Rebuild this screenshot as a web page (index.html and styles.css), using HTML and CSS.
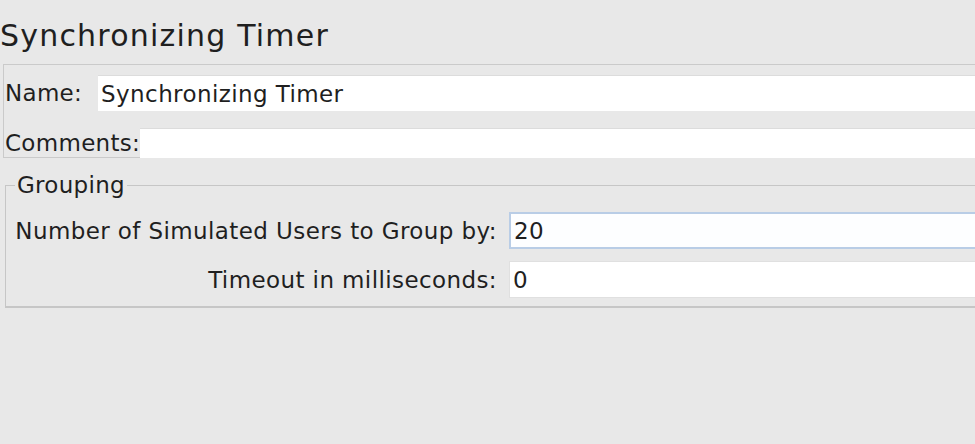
FILE: index.html
```html
<html>
	<head>
		<link rel="stylesheet" href="styles.css">
	</head>
	<body>
		<h1 class="title">Synchronizing Timer</h1>

		<div class="panel">
			<div class="row name-row">
				<label>Name:</label>
				<input class="field" value="Synchronizing Timer">
			</div>
			<div class="row comments-row">
				<label>Comments:</label>
				<input class="field">
			</div>
		</div>

		<fieldset class="group">
			<legend>Grouping</legend>
			<div class="grid">
				<label>Number of Simulated Users to Group by:</label>
				<input class="field focused" value="20">
				<label>Timeout in milliseconds:</label>
				<input class="field" value="0">
			</div>
		</fieldset>
	</body>
</html>
```
FILE: styles.css
```css
body {
	margin: 0;
	background: #e8e8e8;
	font-family: "DejaVu Sans", Verdana, sans-serif;
	color: #1f1f1f;
	overflow: hidden;
}

.title {
	margin: 0;
	height: 64px;
	padding-top: 17px;
	box-sizing: border-box;
	font-size: 30px;
	font-weight: normal;
	letter-spacing: 1.2px;
	line-height: 38px;
	color: #1f1f1f;
}

.panel {
	margin-left: 3px;
	border: 1px solid #cacaca;
	border-right: none;
	padding-top: 10px;
	height: 94px;
	box-sizing: border-box;
}

.row {
	display: flex;
	align-items: center;
}

.row label {
	font-size: 23px;
	letter-spacing: 0.3px;
	padding-left: 1px;
}

.name-row {
	height: 36px;
}

.name-row label {
	margin-right: 16px;
}

.comments-row {
	margin-top: 17px;
	height: 30px;
}

.comments-row label {
	margin-right: 0;
}

.field {
	flex: 1;
	min-width: 0;
	height: 100%;
	border: none;
	border-top: 1px solid #dcdcdc;
	background: #fff;
	font-family: "DejaVu Sans", Verdana, sans-serif;
	font-size: 23px;
	letter-spacing: 0.4px;
	color: #1f1f1f;
	padding: 0 3px;
	outline: none;
}

.group {
	margin: 14px 0 0 5px;
	padding: 13px 0 8px 9px;
	border: 1px solid #c6c6c6;
	border-right: none;
	border-bottom: 2px solid #c6c6c6;
}

.group legend {
	font-size: 23px;
	letter-spacing: 0.3px;
	line-height: 27px;
	padding: 0 2px;
	margin-left: 0;
}

.grid {
	display: grid;
	grid-template-columns: 482px 1fr;
	column-gap: 12px;
	row-gap: 12px;
	align-items: center;
}

.grid label {
	text-align: right;
	font-size: 23px;
	letter-spacing: 0.4px;
	white-space: nowrap;
}

.grid .field {
	height: 37px;
	border: 1px solid #e0e0e0;
	border-right: none;
}

.grid .focused {
	border: 2px solid #b9cde6;
	border-right: none;
	background: #fdfeff;
}
```
